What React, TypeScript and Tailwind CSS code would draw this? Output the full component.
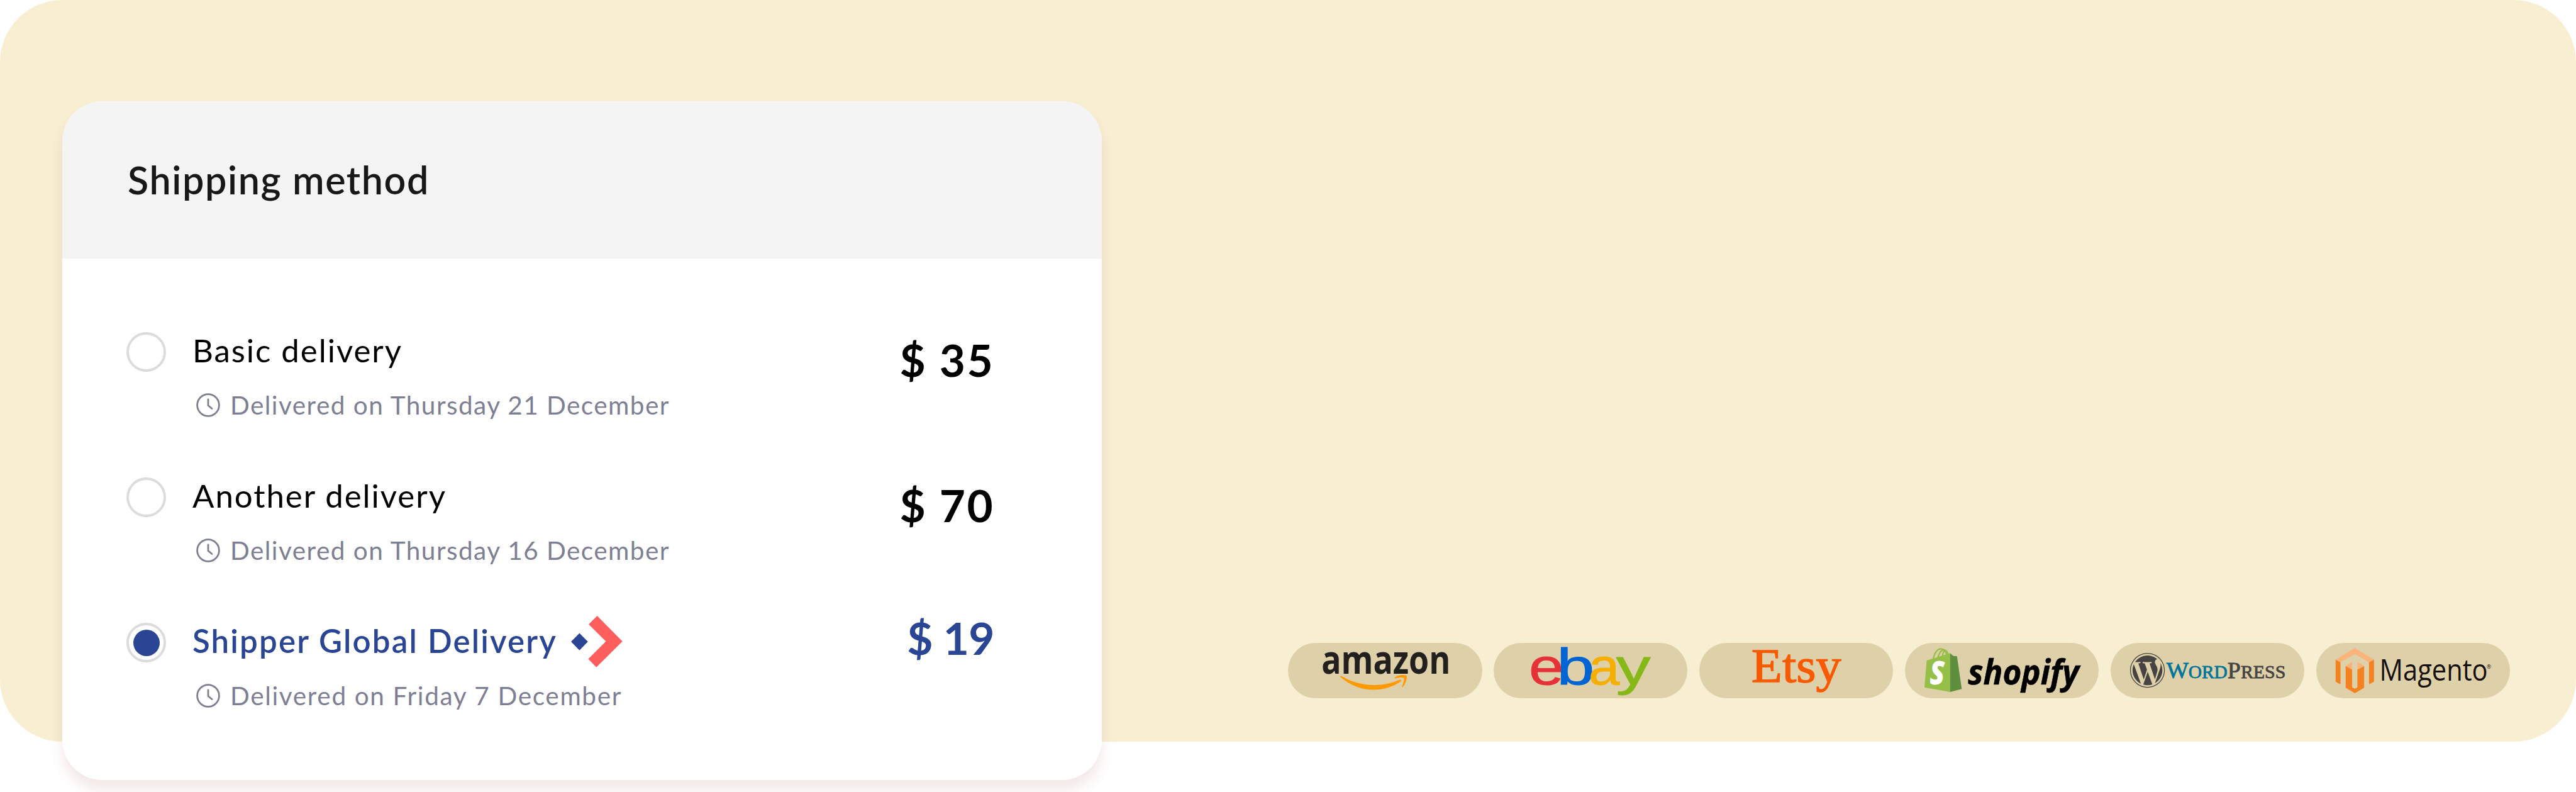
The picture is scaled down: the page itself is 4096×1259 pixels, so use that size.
import { FaWordpress } from 'react-icons/fa';

const methods = [
  { name: 'Basic delivery', eta: 'Delivered on Thursday 21 December', price: '$ 35', selected: false },
  { name: 'Another delivery', eta: 'Delivered on Thursday 16 December', price: '$ 70', selected: false },
  { name: 'Shipper Global Delivery', eta: 'Delivered on Friday 7 December', price: '$ 19', selected: true },
];

function ClockIcon() {
  return (
    <svg viewBox="0 0 38 38" className="w-[38px] h-[38px] shrink-0" fill="none" stroke="#7e7f93" strokeWidth="2.8" strokeLinecap="round">
      <circle cx="19" cy="19" r="17.4" />
      <path d="M19 10v9.5l6 5" />
    </svg>
  );
}

function ShipperMark() {
  return (
    <svg viewBox="0 0 82 82" className="w-[82px] h-[82px] shrink-0">
      <path d="M13.4 27.5 26.8 41.1 13.4 54.7 0 41.1Z" fill="#2a4593" />
      <path d="M41.5 0 81.7 40.6 40.2 81.7 27.4 68.4 55.5 40.6 28.1 13.6Z" fill="#ff5f5c" />
    </svg>
  );
}

function Amazon() {
  return (
    <>
      <text x="69" y="64" fontSize="81" fontWeight="700" textLength="266" lengthAdjust="spacingAndGlyphs" fill="#221f1f" className="font-['Open_Sans',sans-serif]">amazon</text>
      <g fill="#ff9a00">
        <path d="M108 69.5C108 67.5 110 68 111.5 69 130 80 152 86.7 178 86.7c18 0 37-4.2 52-10.7 3-1.3 5 1.5 2.5 3.5C217 91 196 96.7 176 96.7 150 96.7 127 86 108.5 70.5Z" />
        <path d="M220 71.5C226 66 240 65 244.5 67.5 246.5 71 243 84 237 90.5 236 91.5 234.5 91 235 89.5 237.5 84 240.5 75 239 72.5 237 70 227 71.5 221.5 72.8 219.5 73.2 219 72.5 220 71.5Z" />
      </g>
    </>
  );
}

function Ebay() {
  return (
    <g fontSize="105" strokeWidth="1.2" className="font-['Liberation_Sans',sans-serif]">
      <text x="72.5" y="85.7" textLength="72" lengthAdjust="spacingAndGlyphs" fill="#e53238" stroke="#e53238">e</text>
      <text x="130" y="85.7" textLength="78" lengthAdjust="spacingAndGlyphs" fill="#0064d2" stroke="#0064d2">b</text>
      <text x="196" y="85.7" textLength="64" lengthAdjust="spacingAndGlyphs" fill="#f5af02" stroke="#f5af02">a</text>
      <text x="252.5" y="85.7" textLength="71" lengthAdjust="spacingAndGlyphs" fill="#86b817" stroke="#86b817">y</text>
    </g>
  );
}

function Etsy() {
  return (
    <text x="107.5" y="80.2" fontSize="100" strokeWidth="1.8" textLength="185" lengthAdjust="spacingAndGlyphs" fill="#f85a00" stroke="#f85a00" className="font-['Liberation_Serif',serif]">Etsy</text>
  );
}

function Shopify() {
  return (
    <>
      <path d="M44.8 36.3 93 21v80L40.2 91.7Z" fill="#95bf47" />
      <path d="m93 21 6.9 6 7.4.3L117.1 95 93 101Z" fill="#5e8e3e" />
      <g fill="none" stroke="#95bf47" strokeWidth="3">
        <path d="M58.5 33C61 19 68 11.5 74.5 12c7 .6 10 5 11.5 12" />
        <path d="M68 30c2-9 7-16 12.5-15.5 4.5.5 7 4 8.5 9M77.5 27c.5-6 2.5-10.5 6-12" />
      </g>
      <text x="51" y="85.5" fontSize="66" fontWeight="800" fontStyle="italic" textLength="31" lengthAdjust="spacingAndGlyphs" fill="#fff" className="font-['Open_Sans',sans-serif]">S</text>
      <text x="130" y="85.7" fontSize="73" fontWeight="700" fontStyle="italic" strokeWidth=".8" stroke="#000" textLength="229" lengthAdjust="spacingAndGlyphs" fill="#000" className="font-['Open_Sans',sans-serif]">shopify</text>
    </>
  );
}

function WordPress() {
  return (
    <>
      <FaWordpress x="39" y="19.5" size={74} color="#464342" />
      <g fontSize="47" strokeWidth="1" className="font-['Liberation_Serif',serif]">
        <text x="115" y="73" textLength="126" lengthAdjust="spacingAndGlyphs" fill="#00749a" stroke="#00749a">W<tspan fontSize="37">ORD</tspan></text>
        <text x="241" y="73" textLength="120" lengthAdjust="spacingAndGlyphs" fill="#464342" stroke="#464342">P<tspan fontSize="37">RESS</tspan></text>
      </g>
    </>
  );
}

function Magento() {
  return (
    <>
      <g fill="#f58220">
        <path d="M39.9 34.3 50 39.7v45.6L39.9 80Z" />
        <path d="M119 34.3 108.8 39.7v45.6L119 80Z" />
        <path d="M60.7 47.7 74 54v37.7l5.7 2.6 5.1-2.6V54l13.9-6.3v44.6l-19 11.4-19-11.4Z" />
      </g>
      <g fill="#fbb37c">
        <path d="M79.7 10.7 119 34.3l-10.2 5.4L79.7 23 50 39.7l-10.1-5.4Z" />
        <path d="M60.7 47.7 74 39v16.3ZM98.7 47.7 84.8 39v16.3Z" />
      </g>
      <text x="130.5" y="78.3" fontSize="61.5" fontWeight="500" textLength="223" lengthAdjust="spacingAndGlyphs" fill="#15100f" className="font-['Open_Sans',sans-serif]">Magento</text>
      <text x="351.5" y="53" fontSize="11" fill="#15100f" className="font-['Open_Sans',sans-serif]">®</text>
    </>
  );
}

const platforms = [
  { name: 'amazon', Logo: Amazon },
  { name: 'ebay', Logo: Ebay },
  { name: 'etsy', Logo: Etsy },
  { name: 'shopify', Logo: Shopify },
  { name: 'wordpress', Logo: WordPress },
  { name: 'magento', Logo: Magento },
];

export default function App() {
  return (
    <div className="w-[4096px] h-[1259px] overflow-hidden bg-white font-['Lato',sans-serif]">
      <div className="flex items-start justify-between h-[1179px] rounded-[99px] bg-[#f8eed2] pl-[99px] pr-[105px] pt-[161px]">
        <section className="w-[1653px] h-[1079px] shrink-0 rounded-[64px] bg-white shadow-[0_16px_20px_rgba(160,75,60,0.12)]">
          <header className="flex items-center h-[250px] rounded-t-[64px] bg-[#f4f4f4] pl-[104px]">
            <h1 className="text-[61px] font-semibold leading-[70px] tracking-[1.6px] text-[#181818]">Shipping method</h1>
          </header>
          <div className="flex flex-col pt-[109px] pl-[102px] pr-[171px]">
            {methods.map((m) => (
              <div key={m.name} className="flex items-start h-[231px]">
                <span className="flex items-center justify-center w-[63px] h-[63px] mt-[8px] shrink-0 rounded-full border-4 border-[#dcdcdc]">
                  {m.selected && <span className="w-[42px] h-[42px] rounded-full bg-[#2a4593]" />}
                </span>
                <div className="ml-[42px]">
                  <div className={`flex items-center h-[75px] gap-[22px] ${m.selected ? 'text-[51px] font-semibold tracking-[2.15px] text-[#2a4593]' : 'text-[51px] tracking-[1.95px] text-black'}`}>
                    <span>{m.name}</span>
                    {m.selected && <ShipperMark />}
                  </div>
                  <div className={`flex items-center gap-[16px] h-[60px] mt-[19px] pl-[6px] text-[40.5px] text-[#7e7f93] ${m.selected ? 'tracking-[1.65px]' : 'tracking-[1.45px]'}`}>
                    <ClockIcon />
                    <span>{m.eta}</span>
                  </div>
                </div>
                <span className={`ml-auto text-[71px] leading-[84px] font-bold ${m.selected ? 'text-[#2a4593] tracking-[-0.5px] mt-[-10px]' : 'tracking-[2.4px] text-black mt-[10px]'}`}>
                  {m.price}
                </span>
              </div>
            ))}
          </div>
        </section>
        <div className="flex self-end gap-[18.5px] mb-[69px]">
          {platforms.map(({ name, Logo }) => (
            <div key={name} className="w-[308.4px] h-[88px] rounded-full bg-[#ded0a9]">
              <svg viewBox="0 0 400 114" className="w-full h-full overflow-visible">
                <Logo />
              </svg>
            </div>
          ))}
        </div>
      </div>
    </div>
  );
}
